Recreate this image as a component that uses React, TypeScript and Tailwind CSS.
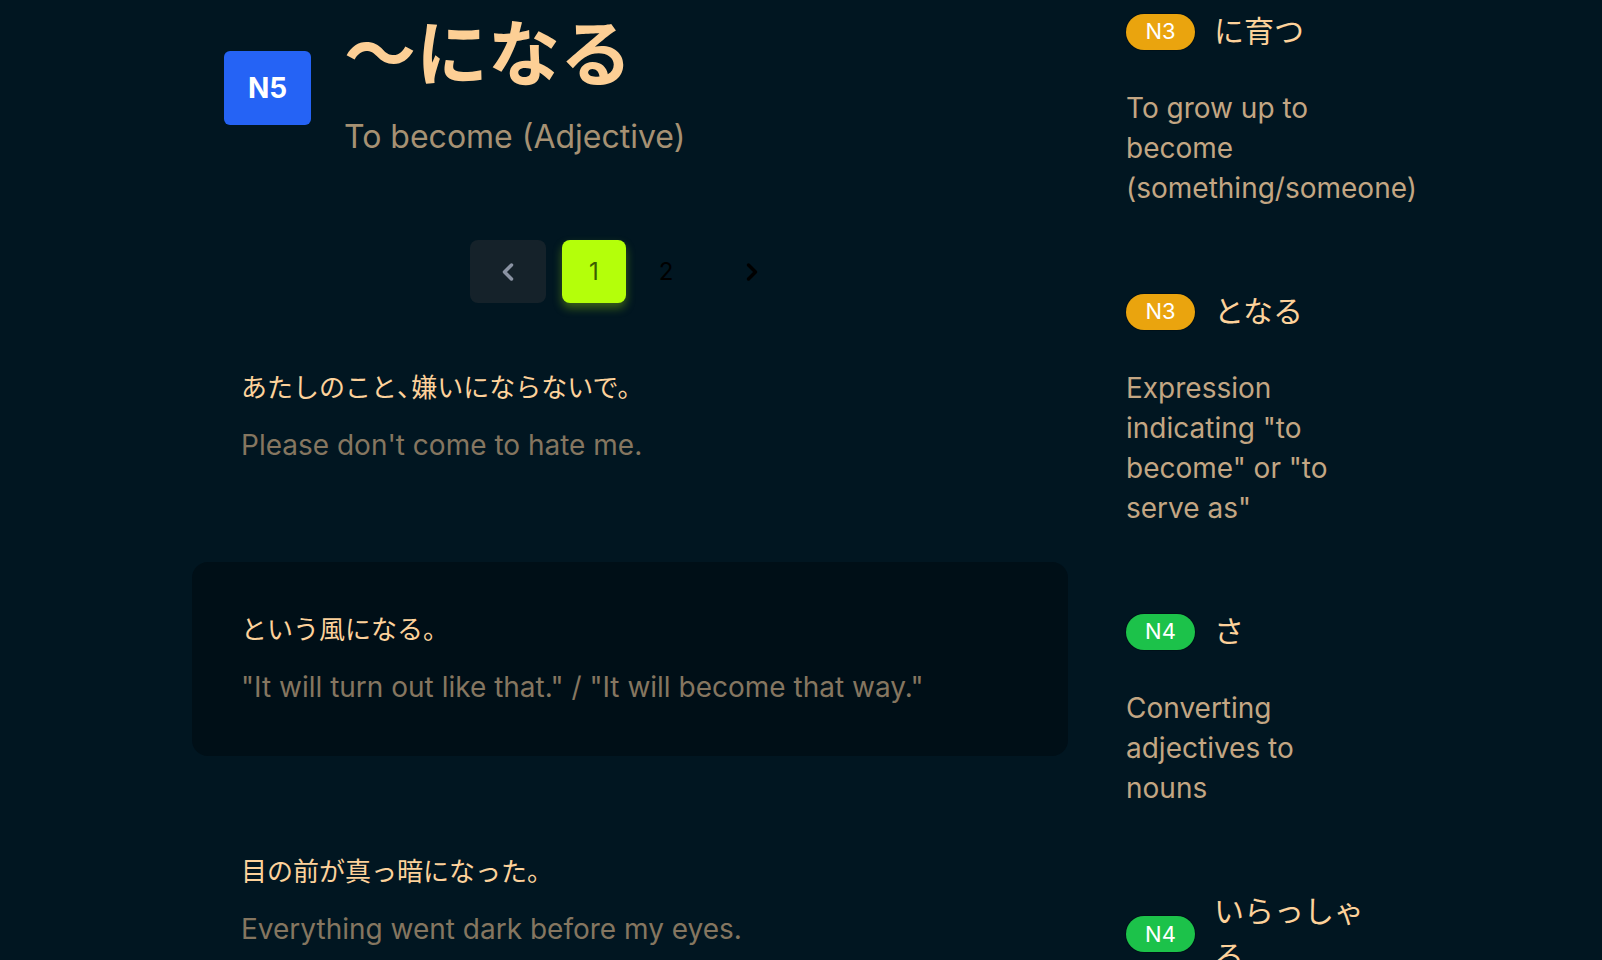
import React from "react";
import { ChevronLeft, ChevronRight } from "lucide-react";

const sentences: { jp: React.ReactNode; en: string; active: boolean }[] = [
  {
    jp: (
      <>
        あたしのこと<span className="tracking-[-0.45em]">、</span>嫌いにならないで。
      </>
    ),
    en: "Please don't come to hate me.",
    active: false,
  },
  { jp: "という風になる。", en: "\"It will turn out like that.\" / \"It will become that way.\"", active: true },
  { jp: "目の前が真っ暗になった。", en: "Everything went dark before my eyes.", active: false },
];

const related = [
  { level: "N3", title: "に育つ", desc: "To grow up to become (something/someone)" },
  { level: "N3", title: "となる", desc: "Expression indicating \"to become\" or \"to serve as\"" },
  { level: "N4", title: "さ", desc: "Converting adjectives to nouns" },
  { level: "N4", title: "いらっしゃる", desc: "" },
];

export default function App() {
  return (
    <div
      className="w-full h-[960px] overflow-hidden bg-[#011621] flex"
      style={{ fontFamily: 'Inter, "Noto Sans CJK JP", sans-serif' }}
    >
      {/* Main column */}
      <div className="ml-[192px] w-[876px] shrink-0 flex flex-col">
        {/* Header */}
        <div className="pt-[18px] pl-[32px] flex items-start gap-[33px]">
          <div className="mt-[33px] w-[87px] h-[74px] rounded-md bg-[#2563f5] flex items-center justify-center text-white text-[28px] font-bold">
            N5
          </div>
          <div className="flex flex-col">
            <div className="text-[72px] leading-[72px] font-bold text-[#fdcf95]">〜になる</div>
            <div className="mt-[28px] text-[32px] leading-[38px] text-[#a69173]">To become (Adjective)</div>
          </div>
        </div>

        {/* Pagination */}
        <div className="mt-[84px] flex items-center justify-center">
          <div className="w-[76px] h-[63px] rounded-lg bg-[#15222a] flex items-center justify-center">
            <ChevronLeft size={28} strokeWidth={3} color="#8a93a3" />
          </div>
          <div className="ml-[16px] w-[64px] h-[63px] rounded-lg bg-[#b4ff0a] shadow-[0_5px_10px_rgba(170,240,10,0.35)] flex items-center justify-center text-[24px] text-[#3b5d00]">
            1
          </div>
          <div className="ml-[8px] w-[64px] h-[63px] flex items-center justify-center text-[24px] text-[#000000]">
            2
          </div>
          <div className="ml-[16px] w-[76px] h-[63px] flex items-center justify-center">
            <ChevronRight size={28} strokeWidth={3} color="#000000" />
          </div>
        </div>

        {/* Sentences */}
        <div className="mt-[17px] flex flex-col gap-[48px]">
          {sentences.map((s, i) => (
            <div
              key={i}
              className={
                "h-[194px] shrink-0 rounded-2xl px-[49px] pt-[50px] " +
                (s.active ? "bg-[#000f17]" : "")
              }
            >
              <div className="text-[26px] leading-[36px] text-[#fdd29b]">{s.jp}</div>
              <div className="mt-[18px] text-[28px] leading-[42px] text-[#857660]">{s.en}</div>
            </div>
          ))}
        </div>
      </div>

      {/* Right column */}
      <div className="ml-[58px] w-[250px] shrink-0 pt-[9px] flex flex-col gap-[81px]">
        {related.map((r, i) => (
          <div key={i} className="flex flex-col">
            <div className="flex items-center gap-[19px]">
              <div
                className={
                  "w-[69px] h-[36px] shrink-0 rounded-full flex items-center justify-center text-white text-[22px] shadow-[0_0_0_1px_rgba(0,0,0,0.25)] " +
                  (r.level === "N3" ? "bg-[#eaa40e]" : "bg-[#1cc24a]")
                }
              >
                {r.level}
              </div>
              <div className="text-[30px] leading-[45px] text-[#fdd29b]">{r.title}</div>
            </div>
            {r.desc && (
              <div className="mt-[34px] text-[28px] leading-[40px] text-[#c3a683]">{r.desc}</div>
            )}
          </div>
        ))}
      </div>
    </div>
  );
}
